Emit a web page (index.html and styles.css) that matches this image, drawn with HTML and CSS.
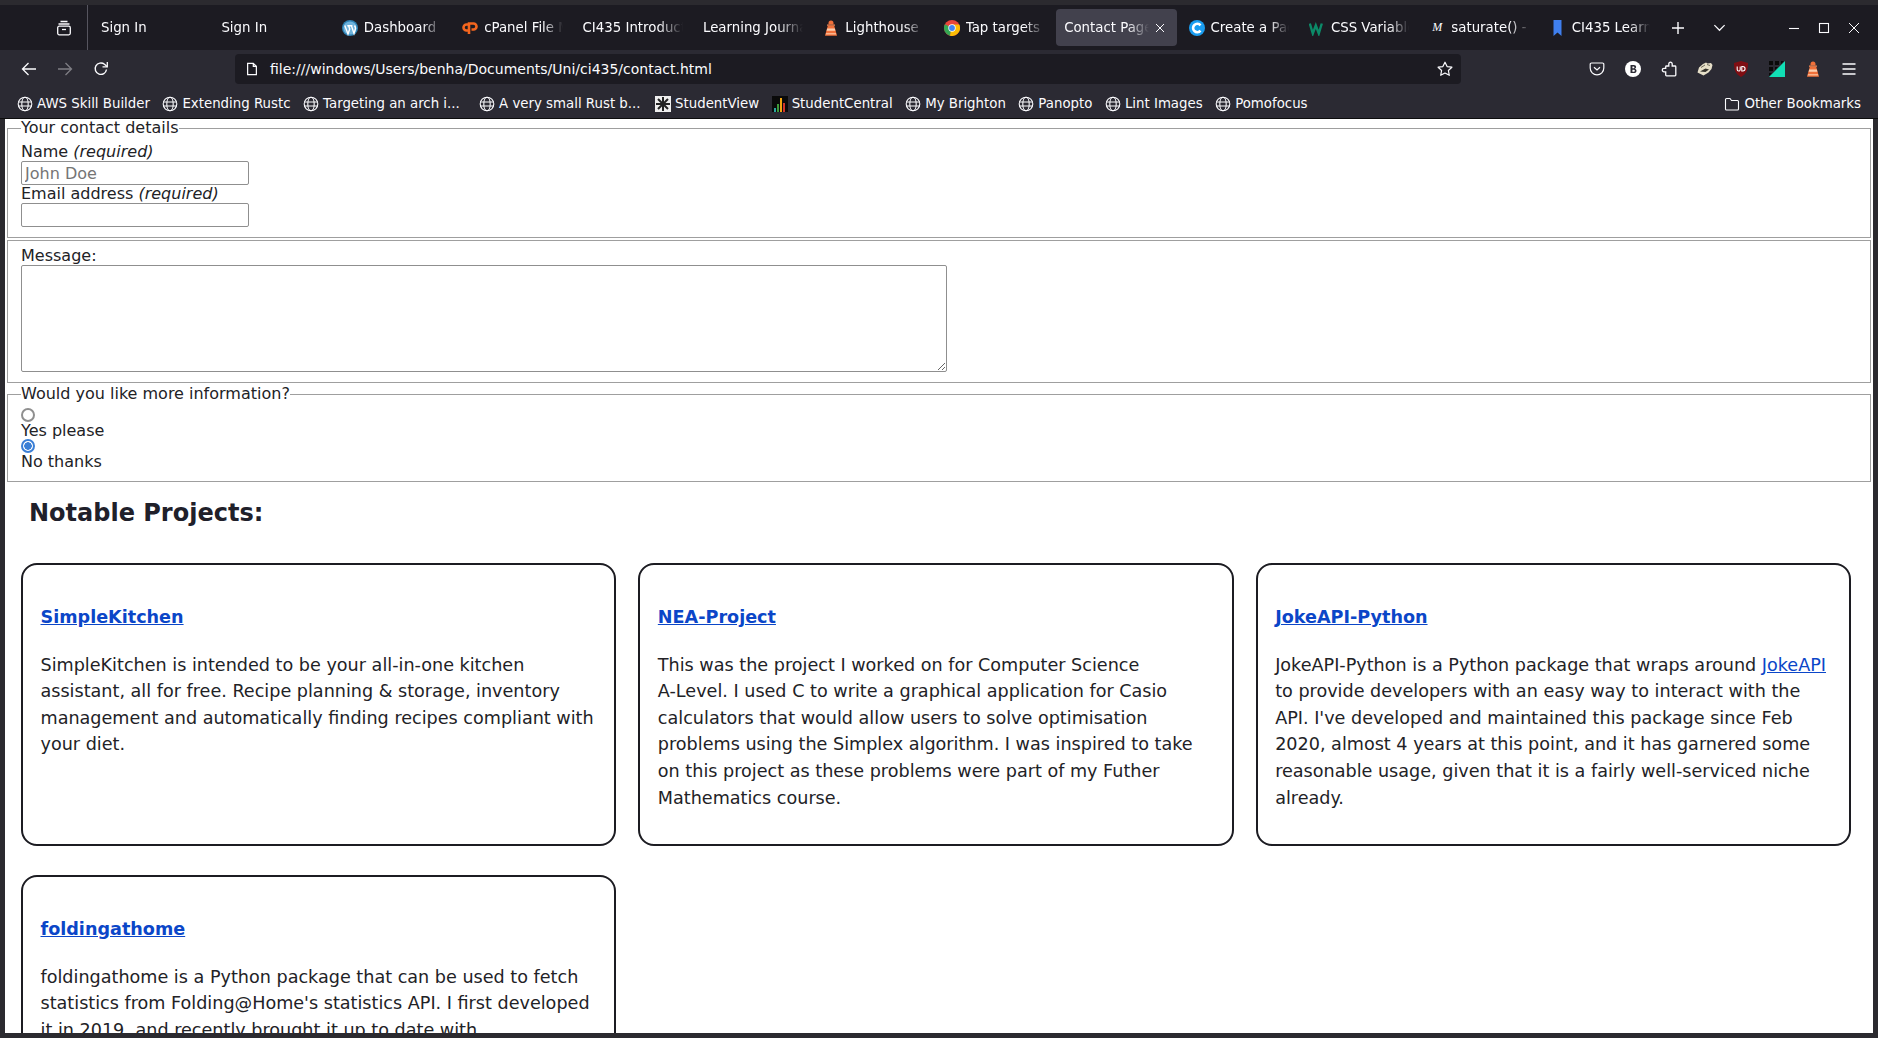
FILE: index.html
```html
<!DOCTYPE html>
<html lang="en">
<head>
  <meta charset="UTF-8" />
  <meta name="viewport" content="width=device-width, initial-scale=1.0"/>
  <title>Contact Page</title>
  <link rel="stylesheet" href="styles.css">
</head>
<body>
  <svg class="defs" width="0" height="0">
    <symbol id="globe" viewBox="0 0 16 16">
      <g fill="none" stroke="#fbfbfe" stroke-width="1.1">
        <circle cx="8" cy="8" r="6.8"/>
        <ellipse cx="8" cy="8" rx="3.2" ry="6.8"/>
        <path d="M1.2 6h13.6M1.2 10h13.6"/>
      </g>
    </symbol>
    <symbol id="lighthouse" viewBox="0 0 16 16">
      <path d="M5.500 3a2.500 2.500 0 0 1 5 0v1.500h-5z" fill="#f0703a"/>
      <path d="M4 4.500h8v1.300H4z" fill="#f58a55"/>
      <path d="M4.800 5.800h6.400l2.800 10H2z" fill="#f0703a"/>
      <path d="M4.200 8.500h7.600l.6 2.300H3.600z" fill="#fbd0b0"/>
      <path d="M3.100 13h9.800l.4 1.400H2.700z" fill="#f9b48c"/>
    </symbol>
  </svg>

  <div class="window">
    <div class="tabbar">
      <div class="tab-start">
        <svg class="icon" viewBox="0 0 16 16" fill="none" stroke="#fbfbfe" stroke-width="1.3"><path d="M4.500 1.500h7M2.500 4h11"/><rect x="1.700" y="6.200" width="12.600" height="8.600" rx="1.500"/><path d="M6 9.500h4"/></svg>
      </div>
      <div class="tabs">
        <div class="tab"><span class="tab-title">Sign In</span></div>
        <div class="tab"><span class="tab-title">Sign In</span></div>
        <div class="tab">
          <svg class="favicon" viewBox="0 0 16 16"><circle cx="8" cy="8" r="8" fill="#2f83b5"/><circle cx="8" cy="8" r="6.600" fill="#6fb3dc"/><path d="M2.800 5.500 6 14l1.700-5-1.100-3.300H5.300M6 5.700h4.400M9.400 5.700 12 13.500l1.300-4.300c.5-1.600-.1-2.700-.8-3.700" fill="none" stroke="#fff" stroke-width="1.400"/></svg>
          <span class="tab-title">Dashboard</span>
        </div>
        <div class="tab">
          <svg class="favicon" viewBox="0 0 16 16" fill="none" stroke="#f4661e" stroke-width="2.600"><path d="M7 4.500H4.500a3 3 0 0 0 0 6H6"/><path d="M7 14V3.500h4.500a3 3 0 0 1 0 6H9.500"/></svg>
          <span class="tab-title">cPanel File Manager</span>
        </div>
        <div class="tab"><span class="tab-title">CI435 Introduction</span></div>
        <div class="tab"><span class="tab-title">Learning Journal</span></div>
        <div class="tab">
          <svg class="favicon"><use href="#lighthouse"/></svg>
          <span class="tab-title">Lighthouse report</span>
        </div>
        <div class="tab">
          <svg class="favicon" viewBox="0 0 16 16"><circle cx="8" cy="8" r="8" fill="#e8453c"/><path d="M8 8 .9 4.300A8 8 0 0 0 6 15.700z" fill="#34a853"/><path d="M8 4.500h7.200A8 8 0 0 1 6 15.700z" fill="#fbbc05"/><circle cx="8" cy="8" r="3.700" fill="#fff"/><circle cx="8" cy="8" r="2.900" fill="#4285f4"/></svg>
          <span class="tab-title">Tap targets guide</span>
        </div>
        <div class="tab tab-active">
          <span class="tab-title">Contact Page</span>
          <svg class="tab-close" viewBox="0 0 10 10" fill="none" stroke="#fbfbfe" stroke-width="1"><path d="M1 1l8 8M9 1l-8 8"/></svg>
        </div>
        <div class="tab">
          <svg class="favicon" viewBox="0 0 16 16"><circle cx="8" cy="8" r="8" fill="#1a9df0"/><path d="M11.500 5.300a4.200 4.200 0 1 0 0 5.400" fill="none" stroke="#fff" stroke-width="2.600"/></svg>
          <span class="tab-title">Create a Page</span>
        </div>
        <div class="tab">
          <svg class="favicon" viewBox="0 0 16 16" fill="none" stroke="#0c8a68" stroke-width="2.400"><path d="M.8 3.500l3 10 3-8 3 8 3-10"/></svg>
          <span class="tab-title">CSS Variables</span>
        </div>
        <div class="tab">
          <span class="favicon-m">M</span>
          <span class="tab-title">saturate() - CSS</span>
        </div>
        <div class="tab">
          <svg class="favicon" viewBox="0 0 16 16"><path d="M3.500 0h8v16L7.500 12.500 3.500 16z" fill="#3f7fee"/></svg>
          <span class="tab-title">CI435 Learning</span>
        </div>
      </div>
      <svg class="tab-new" viewBox="0 0 14 14" fill="none" stroke="#fbfbfe" stroke-width="1.400"><path d="M7 1v12M1 7h12"/></svg>
      <svg class="tab-list" viewBox="0 0 14 14" fill="none" stroke="#fbfbfe" stroke-width="1.300"><path d="M1.500 4.500 7 10l5.500-5.500"/></svg>
      <div class="winctl">
        <svg viewBox="0 0 12 12" fill="none" stroke="#fbfbfe" stroke-width="1.100"><path d="M1 6.500h10"/></svg>
        <svg viewBox="0 0 12 12" fill="none" stroke="#fbfbfe" stroke-width="1.100"><rect x="1.500" y="1.500" width="9" height="9"/></svg>
        <svg viewBox="0 0 12 12" fill="none" stroke="#fbfbfe" stroke-width="1"><path d="M1 1l10 10M11 1 1 11"/></svg>
      </div>
    </div>

    <div class="toolbar">
      <div class="nav-btns">
        <svg class="icon" viewBox="0 0 16 16" fill="none" stroke="#fbfbfe" stroke-width="1.300"><path d="M15 8H1.500M7.500 2 1.500 8l6 6"/></svg>
        <svg class="icon dim" viewBox="0 0 16 16" fill="none" stroke="#fbfbfe" stroke-width="1.300"><path d="M1 8h13.500M8.500 2l6 6-6 6"/></svg>
        <svg class="icon" viewBox="0 0 16 16" fill="none" stroke="#fbfbfe" stroke-width="1.400"><path d="M13.500 8.500A5.700 5.700 0 1 1 11.500 3.300L14 5.500"/><path d="M14.300 1v4.800H9.500" stroke-width="1.300"/></svg>
      </div>
      <div class="urlbar">
        <svg class="icon-sm" viewBox="0 0 16 16" fill="none" stroke="#fbfbfe" stroke-width="1.400"><path d="M3 1.500h6.500l3.500 3.500v9.500H3zM9.500 1.500V5H13"/></svg>
        <span class="url">file:///windows/Users/benha/Documents/Uni/ci435/contact.html</span>
        <svg class="icon-star" viewBox="0 0 16 16" fill="none" stroke="#fbfbfe" stroke-width="1.200"><path d="M8 1.200l2.100 4.400 4.800.6-3.500 3.300.9 4.800L8 12l-4.300 2.300.9-4.800L1.100 6.200l4.800-.6z" stroke-linejoin="round"/></svg>
      </div>
      <div class="ext-btns">
        <svg class="icon" viewBox="0 0 16 16" fill="none" stroke="#fbfbfe" stroke-width="1.200"><path d="M2.500 2h11A1.300 1.300 0 0 1 14.800 3.300V7A6.800 6.800 0 0 1 1.200 7V3.300A1.300 1.300 0 0 1 2.500 2z"/><path d="M5 6.200 8 9l3-2.800"/></svg>
        <svg class="icon" viewBox="0 0 16 16"><circle cx="8" cy="8" r="8" fill="#fff"/><path d="M5.500 4h3.300c1.500 0 2.300.8 2.300 1.900 0 .9-.5 1.500-1.300 1.800 1 .2 1.700.9 1.700 2 0 1.400-1 2.300-2.600 2.300H5.500zm1.900 1.500v1.800h1c.7 0 1-.4 1-.9s-.4-.9-1-.9zm0 3.200v2h1.200c.8 0 1.200-.4 1.200-1s-.4-1-1.200-1z" fill="#2b2a33"/></svg>
        <svg class="icon" viewBox="0 0 16 16" fill="none" stroke="#fbfbfe" stroke-width="1.300"><path d="M9.500 1.200a1.700 1.700 0 0 1 1.700 1.700V5h2.800a.8.8 0 0 1 .8.8V14a.8.8 0 0 1-.8.8H5.500a.8.8 0 0 1-.8-.8v-3.200H3a1.700 1.700 0 0 1 0-3.400h1.700V5.800a.8.8 0 0 1 .8-.8h2.300V2.900a1.700 1.700 0 0 1 1.700-1.700z"/></svg>
        <svg class="icon" viewBox="0 0 16 16"><path d="M.5 11.500 2 6.500 6 3l3-1.500 1.500 1L14 2l1.500 2-1 4-3 3.500-5 3z" fill="#e6dfc8"/><path d="M3 10.500l5.500-3 3.500 1-3.500 2.500z" fill="#35322c"/><path d="M4 6.500l4-2.500M10 3.500l3 1" stroke="#6e6a5c" stroke-width="1" fill="none"/></svg>
        <svg class="icon" viewBox="0 0 16 16"><path d="M8 0l7 2c0 7-1.500 11-7 14C2.500 13 1 9 1 2z" fill="#800e13"/><path d="M4.200 5.500v3a1.500 1.500 0 0 0 3 0v-3M8.800 5.500v4.500h1a2.250 2.250 0 0 0 0-4.500z" fill="none" stroke="#fff" stroke-width="1.100"/></svg>
        <svg class="icon" viewBox="0 0 16 16"><path d="M16 0v16H0z" fill="#11dfb5"/><path d="M0 0h4v4H0zM6 0h4v4H6zM12 0h3l-3 3zM0 6h4v4H0zM6 6h3L6 9zM0 12h3l-3 3z" fill="#0a0a0a"/></svg>
        <svg class="icon"><use href="#lighthouse"/></svg>
        <svg class="icon" viewBox="0 0 16 16" fill="none" stroke="#fbfbfe" stroke-width="1.300"><path d="M1.500 3h13M1.500 8h13M1.500 13h13"/></svg>
      </div>
    </div>

    <div class="bookmarks">
      <div class="bm"><svg class="bm-icon"><use href="#globe"/></svg>AWS Skill Builder</div>
      <div class="bm"><svg class="bm-icon"><use href="#globe"/></svg>Extending Rustc</div>
      <div class="bm bm-long"><svg class="bm-icon"><use href="#globe"/></svg>Targeting an arch i...</div>
      <div class="bm bm-long"><svg class="bm-icon"><use href="#globe"/></svg>A very small Rust b...</div>
      <div class="bm">
        <svg class="bm-icon" viewBox="0 0 16 16"><rect width="16" height="16" fill="#eee"/><path d="M8 1v14M1 8h14M3 3l10 10M13 3 3 13" stroke="#222" stroke-width="2"/></svg>StudentView
      </div>
      <div class="bm">
        <svg class="bm-icon" viewBox="0 0 16 16"><rect width="16" height="16" fill="#0a0a0a"/><path d="M2 16v-4h2v4z" fill="#2aa6a0"/><path d="M5 16V8h2v8z" fill="#3d9a3a"/><path d="M8 16V2h2v14z" fill="#f2a511"/><path d="M11 16V7h2v9z" fill="#d2342a"/></svg>StudentCentral
      </div>
      <div class="bm"><svg class="bm-icon"><use href="#globe"/></svg>My Brighton</div>
      <div class="bm"><svg class="bm-icon"><use href="#globe"/></svg>Panopto</div>
      <div class="bm"><svg class="bm-icon"><use href="#globe"/></svg>Lint Images</div>
      <div class="bm"><svg class="bm-icon"><use href="#globe"/></svg>Pomofocus</div>
      <div class="bm bm-other">
        <svg class="bm-icon" viewBox="0 0 16 16" fill="none" stroke="#fbfbfe" stroke-width="1.100"><path d="M1.500 13V3.500a1 1 0 0 1 1-1h3.500l1.500 2h6a1 1 0 0 1 1 1V13a1 1 0 0 1-1 1h-11a1 1 0 0 1-1-1z"/></svg>Other Bookmarks
      </div>
    </div>

    <main class="page">
      <form>
        <fieldset>
          <legend>Your contact details</legend>
          <label for="name">Name <em>(required)</em></label>
          <input type="text" id="name" placeholder="John Doe">
          <label for="email">Email address <em>(required)</em></label>
          <input type="email" id="email">
        </fieldset>
        <fieldset>
          <label for="message">Message:</label>
          <textarea id="message"></textarea>
        </fieldset>
        <fieldset>
          <legend>Would you like more information?</legend>
          <input type="radio" name="info" id="yes">
          <label for="yes">Yes please</label>
          <input type="radio" name="info" id="no" checked>
          <label for="no">No thanks</label>
        </fieldset>
      </form>

      <h2 class="projects-title">Notable Projects:</h2>
      <div class="projects">
        <div class="project">
          <h3><a href="#">SimpleKitchen</a></h3>
          <p>SimpleKitchen is intended to be your all-in-one kitchen assistant, all for free. Recipe planning &amp; storage, inventory management and automatically finding recipes compliant with your diet.</p>
        </div>
        <div class="project">
          <h3><a href="#">NEA-Project</a></h3>
          <p>This was the project I worked on for Computer Science <span class="nowrap">A-Level.</span> I used C to write a graphical application for Casio calculators that would allow users to solve optimisation problems using the Simplex algorithm. I was inspired to take on this project as these problems were part of my Futher Mathematics course.</p>
        </div>
        <div class="project">
          <h3><a href="#">JokeAPI-Python</a></h3>
          <p>JokeAPI-Python is a Python package that wraps around <a href="#">JokeAPI</a> to provide developers with an easy way to interact with the API. I've developed and maintained this package since Feb 2020, almost 4 years at this point, and it has garnered some reasonable usage, given that it is a fairly well-serviced niche already.</p>
        </div>
        <div class="project">
          <h3><a href="#">foldingathome</a></h3>
          <p>foldingathome is a Python package that can be used to fetch statistics from Folding@Home's statistics API. I first developed it in 2019, and recently brought it up to date with</p>
        </div>
      </div>
    </main>
  </div>
</body>
</html>
```

FILE: styles.css
```css
* {
  box-sizing: border-box;
}
html, body {
  height: 100%;
  margin: 0;
  overflow: hidden;
}
body {
  font-family: "DejaVu Sans", sans-serif;
  background: #2b2a33;
}
.defs {
  position: absolute;
}
.window {
  height: 100vh;
  display: flex;
  flex-direction: column;
  padding: 5px 5px 5px;
  background: #2b2a2f;
}

/* tab strip */
.tabbar {
  flex: none;
  height: 45px;
  margin: 0 -5px;
  padding-left: 5px;
  display: flex;
  align-items: center;
  background: #1c1b22;
  color: #fbfbfe;
  font-size: 13.33px;
}
.tab-start {
  width: 83px;
  height: 100%;
  margin-right: 3px;
  display: flex;
  align-items: center;
  justify-content: center;
  padding-left: 35px;
  border-right: 1px solid #56555f;
}
.tabs {
  width: 1569px;
  display: flex;
}
.tab {
  flex: 1 1 0;
  min-width: 0;
  height: 37px;
  margin: 0 2px;
  padding: 0 8px;
  display: flex;
  align-items: center;
  gap: 6px;
  border-radius: 4px;
  overflow: hidden;
}
.tab-title {
  flex: 1;
  min-width: 0;
  overflow: hidden;
  white-space: nowrap;
  -webkit-mask-image: linear-gradient(to right, #000 75%, transparent 100%);
  mask-image: linear-gradient(to right, #000 75%, transparent 100%);
}
.tab-active {
  padding-right: 12px;
  background: #42414d;
}
.favicon {
  flex: none;
  width: 16px;
  height: 16px;
}
.favicon-m {
  flex: none;
  width: 16px;
  font-family: "Liberation Serif", serif;
  font-style: italic;
  font-size: 12px;
  text-align: center;
}
.tab-close {
  flex: none;
  width: 10px;
  height: 10px;
}
.tab-new {
  width: 14px;
  height: 14px;
  margin-left: 11px;
}
.tab-list {
  width: 13px;
  height: 13px;
  margin-left: 28px;
}
.winctl {
  margin-left: auto;
  margin-right: 18px;
  display: flex;
  gap: 18px;
}
.winctl svg {
  width: 12px;
  height: 12px;
}

/* nav toolbar */
.toolbar {
  flex: none;
  height: 37px;
  margin: 0 -5px;
  padding: 0 5px;
  display: flex;
  align-items: center;
  background: #2b2a33;
}
.icon {
  flex: none;
  width: 16px;
  height: 16px;
}
.icon.dim {
  opacity: 0.4;
}
.nav-btns {
  width: 230px;
  padding-left: 16px;
  display: flex;
  gap: 20px;
}
.urlbar {
  width: 1226px;
  height: 30px;
  padding: 0 8px 0 10px;
  display: flex;
  align-items: center;
  gap: 11px;
  background: #1c1b22;
  border-radius: 4px;
  color: #fbfbfe;
  font-size: 14px;
}
.url {
  flex: 1;
}
.icon-sm {
  width: 14px;
  height: 14px;
}
.icon-star {
  width: 16px;
  height: 16px;
}
.ext-btns {
  margin-left: 128px;
  display: flex;
  gap: 20px;
}

/* bookmarks */
.bookmarks {
  flex: none;
  height: 32px;
  margin: 0 -5px;
  padding: 2px 17px 0 17px;
  display: flex;
  align-items: center;
  gap: 12.5px;
  background: #2b2a33;
  border-bottom: 1px solid #0c0c0d;
  color: #fbfbfe;
  font-size: 13.33px;
}
.bm {
  display: flex;
  align-items: center;
  gap: 4px;
  white-space: nowrap;
}
.bm-long {
  width: 163.5px;
}
.bm-other {
  margin-left: auto;
}
.bm-icon {
  flex: none;
  width: 16px;
  height: 16px;
}

/* page */
.page {
  flex: 1;
  min-height: 0;
  overflow: hidden;
  background: #fff;
  color: #222226;
  font-size: 16px;
}
form {
  line-height: 18px;
}
fieldset {
  margin: 0 2px 2px;
  padding: 0.35em 13px 0.625em;
  border: 1px solid #9f9f9f;
}
legend {
  padding: 0;
  line-height: 18.6px;
}
label {
  display: block;
}
input[type="text"], input[type="email"] {
  display: block;
  width: 228px;
  height: 24px;
  padding: 1px 3px;
  border: 1px solid #8f8f8f;
  border-radius: 2px;
  font: inherit;
}
input::placeholder {
  color: #757575;
}
textarea {
  display: block;
  width: 926px;
  height: 107px;
  border: 1px solid #8f8f8f;
  border-radius: 2px;
}
input[type="radio"] {
  appearance: none;
  display: block;
  width: 14px;
  height: 14px;
  margin: -1px 0 0;
  border: 2px solid #8f8f8f;
  border-radius: 50%;
  background: #fff;
}
input[type="radio"]:checked {
  border-color: #3b7fd6;
  background: radial-gradient(circle, #3b7fd6 0 3.5px, #fff 4px);
}
.projects-title {
  margin: 17px 0 36px 24px;
  font-size: 24px;
  line-height: 28px;
  color: #20202a;
}
.projects {
  padding: 0 22px 0 16px;
  display: grid;
  grid-template-columns: repeat(3, 1fr);
  column-gap: 22px;
  row-gap: 29px;
}
.project {
  padding: 0 17.5px;
  border: 2px solid #1c1c22;
  border-radius: 16px;
  font-size: 17.6px;
  line-height: 26.6px;
}
.project h3 {
  margin: 39px 0 21px;
  font-size: 17.6px;
}
.project p {
  margin: 0 0 33px;
}
.project a {
  color: #0b46c8;
}
.nowrap {
  white-space: nowrap;
}
```
